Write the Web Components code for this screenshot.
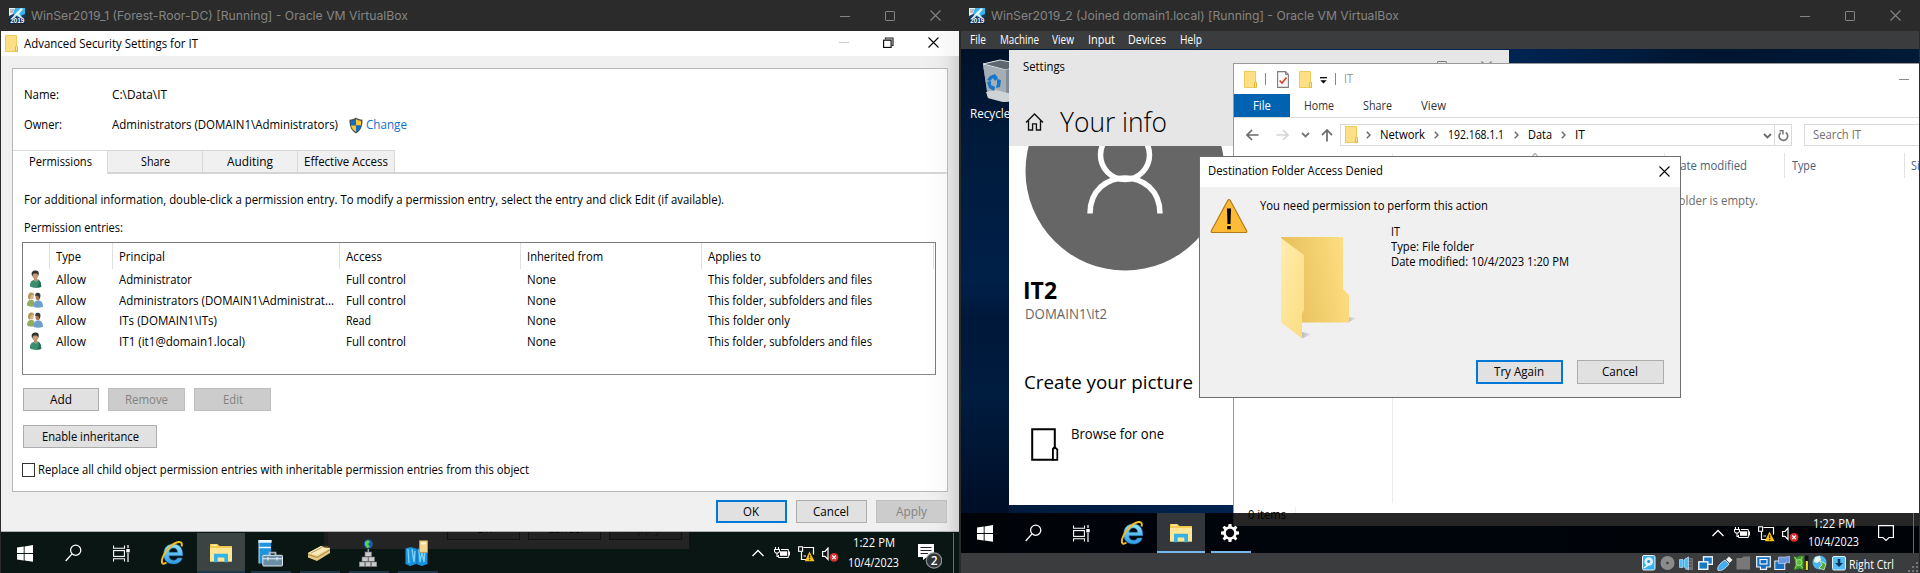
<!DOCTYPE html>
<html lang="en">
<head>
<meta charset="utf-8">
<title>Oracle VM VirtualBox</title>
<style>
html,body{margin:0;padding:0;background:#2b2b2b}
body{width:1920px;height:573px;overflow:hidden;font:12.5px/16px "Open Sans","Noto Sans",sans-serif;color:#000}
</style>
</head>
<body>
<vm-desk></vm-desk>
<script>
const ICONS = {
vm:[16,16,'<rect width="16" height="16" fill="#0f3c63"/><path d="M0 0H7L4 6 0 8Z" fill="#eef4f8"/><path d="M6 0H16V6L9 9 4 6Z" fill="#39b4ee"/><path d="M9 3 12 0 14 1 10 6 14 10 12 11 8 7 4 12 1 12 6 6Z" fill="#fff" opacity=".85"/><path d="M1 2H5M1 4H4" stroke="#888"/><rect y="10" width="16" height="6" fill="#0d2135" opacity=".8"/><text x="1.2" y="15.3" font-size="6.4" font-weight="700" font-family="Liberation Sans" fill="#fff">2019</text>'],
min:[10,10,'<path d="M0 5.5H10" stroke="currentColor"/>'],
max:[10,10,'<rect x=".5" y=".5" width="9" height="9" rx=".6" fill="none" stroke="currentColor"/>'],
close:[11,11,'<path d="M.5.5 10.5 10.5M10.5.5.5 10.5" stroke="currentColor" stroke-width="1.1"/>'],
restore:[11,11,'<path d="M2.5 2.5V1H10V8.5H8.5" fill="none" stroke="#222" stroke-width="1.2"/><path d="M3 1.8H9.5" stroke="#777" stroke-width="1.4"/><rect x=".6" y="3.2" width="7.5" height="7.2" fill="#fff" stroke="#000" stroke-width="1.1"/>'],
folder:[13,17,'<path d="M.5.5H11.5V11L12.5 12V16.5H.5Z" fill="#fddf85" stroke="#eccb5c"/><path d="M10.5 16V12L11.5 10.8 12.5 12V16.5Z" fill="#ffe9a6" stroke="#e3b73d"/>'],
shield:[14,17,'<path d="M7 .5C9 2 11 2.5 13.5 2.7 13.6 9 12 13.5 7 16.5 2 13.5.4 9 .5 2.7 3 2.5 5 2 7 .5Z" fill="#4a4f55"/><path d="M7 2C5.500 3 4 3.600 2 3.900V8.500H7Z" fill="#0c6fce"/><path d="M7 2C8.500 3 10 3.600 12 3.900V8.500H7Z" fill="#fcc52a"/><path d="M2 8.500H7V15C4 13 2.300 11 2 8.500Z" fill="#fcc52a"/><path d="M12 8.500H7V15C10 13 11.700 11 12 8.500Z" fill="#0c6fce"/>'],
user:[13,18,'<path d="M1 16.500C.5 12.500 2.500 10 6 9.500 10 9 12.500 12 12.200 17 8 18.500 4 18 1 16.500Z" fill="#3b8f6e"/><path d="M4.500 9.500 6.500 11.500 9 10" fill="#d9ebe3"/><path d="M5 7H8V10.500L6.500 11.500 5 10Z" fill="#b98a63"/><ellipse cx="6.400" cy="5" rx="2.900" ry="3.700" fill="#c99b73"/><path d="M2.800 5C2 1 5 .3 7 .5 9.800.7 10.300 3 9.300 6 8.800 4 8 3.500 5.500 3.600 4 3.700 3.600 5 3.600 7Z" fill="#33332d"/><path d="M8 9C11 11 10 14 8 17 12 17.500 12 17 12.200 16.800 12.300 12 10.500 9.600 8 9Z" fill="#256d52"/>'],
group:[16,16,'<path d="M0 13.500C0 10 1.500 8 4 7.800 7 8 8 10 8 14 5 15 2 14.800 0 13.500Z" fill="#8fad5c"/><ellipse cx="4.500" cy="4.500" rx="2.200" ry="3" fill="#ddb58c"/><path d="M1 6C.8 1.500 2.500.3 4.500.4 6.500.4 7.300 2 7 3.500 5 2.500 4 3 3.500 5L2.500 8Z" fill="#b4995a"/><path d="M6.800 15C6.500 11 8 8.500 11 8.200 14.500 8.300 16 11 16 14.800 13 16 9 16 6.800 15Z" fill="#6c9dcc"/><ellipse cx="10.800" cy="5" rx="2.300" ry="3.100" fill="#a87654"/><path d="M8.300 4C8 1.300 9.500.8 11.200.8 13.500.9 14 3 13 6L12.300 7C12.300 4 11 3.500 8.300 4Z" fill="#3a3a36"/>'],
start:[16,17,'<path d="M0 2.500 6.700 1.500V8H0ZM7.600 1.400 16 .1V8H7.600ZM0 9H6.700V15.400L0 14.500ZM7.600 9H16V16.800L7.600 15.600Z" fill="#fff"/>'],
search:[17,18,'<circle cx="10.700" cy="6.200" r="5.100" fill="none" stroke="#fff" stroke-width="1.250"/><path d="M7 9.900.7 17" stroke="#fff" stroke-width="1.400"/>'],
tview:[17,17,'<path d="M.5.500V3.300H11.500V.5M.5 16.500V13.700H11.500V16.500" fill="none" stroke="#fff" stroke-width="1.100"/><rect x=".6" y="5.600" width="10.800" height="5.800" fill="none" stroke="#fff" stroke-width="1.100"/><path d="M15 0V3M15 8V17" stroke="#fff" stroke-width="1.200"/><rect x="13.300" y="4" width="3.400" height="3.400" fill="#fff"/>'],
ie:[24,26,'<defs><linearGradient id="g" x1="0" y1="0" x2="0" y2="1"><stop offset="0" stop-color="#8fe3fb"/><stop offset="1" stop-color="#2d9be4"/></linearGradient></defs><path d="M22.800 15.800H9C9.200 18.700 11 20.300 13.500 20.300 15.500 20.300 16.800 19.600 17.400 18H22.200C21 22 17.600 24 13.300 24 7.400 24 3.700 20.300 3.700 14 3.700 7.800 7.500 4 13.300 4 19.500 4 23 8 22.800 15.800ZM9.100 12.300H17.600C17.300 9.500 16 7.900 13.400 7.900 10.900 7.900 9.400 9.500 9.100 12.300Z" fill="url(#g)" stroke="#1a70bd" stroke-width=".5"/><path d="M21.500 6.500C22.500 3.500 21.500 1.600 18.500 2 12 3 3.500 12.500 2 20 1.300 24 3.500 24.500 6.500 22.500" fill="none" stroke="#f3bb21" stroke-width="2"/>'],
explorer:[22,20,'<path d="M0 1H7.500L9.500 3H22V18.500H0Z" fill="#f3c64b"/><rect x="1.200" y="1.600" width="5.500" height="1.300" fill="#fff1b8"/><path d="M0 4.800H22V18.500H0Z" fill="#ffe695"/><path d="M4 19.300V10.800H18V19.300H14.300V14.600H7.700V19.300Z" fill="#35b1ea"/>'],
server:[25,27,'<rect x="1" y=".5" width="12" height="23" fill="#1e94dd"/><path d="M1 .5H13V2H1ZM1 7.500H13" fill="#eaf6ff" stroke="#eaf6ff" stroke-width="1.300"/><path d="M1 .5V23.500" stroke="#b9e1fa"/><path d="M11.500 15V12.700H17.500V15" fill="none" stroke="#aab5bb" stroke-width="1.800"/><rect x="4.800" y="15.300" width="19.700" height="10.700" rx=".8" fill="#6d8fa6" stroke="#dce6ec"/><path d="M5 18.700H24M10 17V20.500M19 17V20.500" stroke="#e8eff3" stroke-width="1.100"/>'],
book:[24,17,'<path d="M1 8 14 1 23 3 23 8 10 16 1 12.500Z" fill="#e6c980"/><path d="M1 8 14 1 23 3 10 10.500Z" fill="#f8eab8"/><path d="M1 9.500 10 12.500 23 4.800" stroke="#aa8746" fill="none"/><path d="M4 8 15 2.500" stroke="#b59a5e"/><path d="M14 .5 21 1 22 3 17 2.600Z" fill="#5b4426"/>'],
sites:[18,28,'<circle cx="9.300" cy="5" r="4.500" fill="#155eaf"/><path d="M6 3 9 1 11 3 9 5 11 8 8 9 6 6Z" fill="#5dcb55"/><path d="M9.300 10V13" stroke="#9aa" stroke-width="1.500"/><g fill="#c7c9ca" stroke="#777" stroke-width=".6"><rect x="6" y="13" width="6.500" height="4.500"/><rect x="3" y="18" width="6" height="4.300"/><rect x="9.500" y="18" width="6" height="4.300"/><rect x=".3" y="23" width="5.500" height="4.500"/><rect x="6.300" y="23" width="5.500" height="4.500"/><rect x="12.300" y="23" width="5.500" height="4.500"/></g>'],
dns:[24,27,'<path d="M.5 8.500 6 7 12 9 18 7 22.500 9V24L17 26 11 24 5 26 .5 24Z" fill="#1a93de"/><path d="M3 9 4 23M7 9 9 22 10 11M14 10 15 22 17 12 19 22 20 10" stroke="#7fd1f7" stroke-width="1.300" fill="none"/><path d="M12 9V24" stroke="#0b62ad"/><rect x="14.500" y=".8" width="8" height="11.500" fill="#f3d590" stroke="#c29b4b" stroke-width=".8"/><rect x="16" y="2.300" width="5" height="2" fill="#fff6d4"/>'],
gear:[18,18,'<path d="M7.600 0H10.400L10.800 2.600 12.400 3.300 14.600 1.700 16.400 3.500 14.800 5.700 15.500 7.300 18 7.600V10.400L15.500 10.800 14.800 12.400 16.400 14.600 14.600 16.400 12.400 14.800 10.800 15.500 10.400 18H7.600L7.200 15.500 5.600 14.800 3.400 16.400 1.600 14.600 3.200 12.400 2.500 10.800 0 10.400V7.600L2.500 7.300 3.200 5.700 1.600 3.500 3.400 1.700 5.600 3.300 7.200 2.600Z" fill="#fff"/><circle cx="9" cy="9" r="4.200" fill="#05080e"/>'],
up:[12,8,'<path d="M.5 7 6 1.500 11.500 7" fill="none" stroke="#fff" stroke-width="1.300"/>'],
battery:[16,12,'<path d="M1.500 0V2.500M4.500 0V2.500M.5 2.500H5.500V4.500L4.200 6H1.800L.5 4.500ZM3 6V9.500H5" fill="none" stroke="#fff" stroke-width="1.100"/><path d="M7 2.500H14.300V10.500H4.500V8" fill="none" stroke="#fff"/><rect x="6" y="4.300" width="7" height="4.500" fill="#fff"/><rect x="14.500" y="4.500" width="1.500" height="4" fill="#fff"/>'],
net:[17,16,'<path d="M5.500 1.500H15.500V8.500M3.500 6V13.500H8M5.500 10H8" fill="none" stroke="#fff" stroke-width="1.200"/><rect x=".6" y=".8" width="4" height="4.500" fill="none" stroke="#fff" stroke-width="1.100"/><path d="M11.500 5.500 16.500 15.300H6.800Z" fill="#fcc30b"/><path d="M11.600 8.700V12.200M11.600 13V14.300" stroke="#222" stroke-width="1.300"/>'],
speaker:[17,15,'<path d="M.6 4.500H3L6 1V12.500L3 9.300H.6Z" fill="none" stroke="#fff" stroke-width="1.200"/><circle cx="12" cy="10.300" r="4.400" fill="#d9302c"/><path d="M10.200 8.500 13.800 12.100M13.800 8.500 10.200 12.100" stroke="#fff" stroke-width="1.300"/>'],
note:[16,17,'<path d="M.6.7H15.400V12.500H11L8 15.500 5 12.500H.6Z" fill="none" stroke="#fff" stroke-width="1.200"/>'],
note2:[24,26,'<path d="M0 0H16V13H9L5 16V13H0Z" fill="#fff"/><path d="M2.500 3.500H13.500M2.500 6.500H13.500M2.500 9.500H10" stroke="#223" stroke-width="1.200"/><circle cx="16" cy="16.500" r="7.700" fill="#2f3537" stroke="#8d9395" stroke-width="1.200"/><text x="12.700" y="21" font-size="12" font-weight="600" font-family="Open Sans" fill="#fff">2</text>'],
bin:[30,43,'<path d="M1 5 18 1 30 4V41L20 43 6 39Z" fill="#8e99a3"/><path d="M1 5 18 1 40 5 24 11Z" fill="#5d676e" stroke="#dfe5e8"/><path d="M1 6 24 11 24 43 6 38Z" fill="#a5adb5"/><path d="M24 11 30 9V42L24 43Z" fill="#838c96"/><path d="M4 33 14 31 30 35V42L22 43 6 39Z" fill="#cfd3d5"/><g fill="#1476cc"><path d="M8 17 13 15 16 19 13 22 11 19 8 22 5 21Z"/><path d="M15 20 19 21 18 28 14 29 15 25Z"/><path d="M5 23 9 22 9 26 13 28 12 32 7 29Z"/></g>'],
home:[19,18,'<path d="M1 9.500 9.500 1 18 9.500M3.500 7.500V17H7.600V10.800H11.400V17H15.500V7.500" fill="none" stroke="#111" stroke-width="1.350"/>'],
avatar:[200,125,'<circle cx="100" cy="25" r="99.500" fill="#666"/><g fill="none" stroke="#fff" stroke-width="5.500"><circle cx="100" cy="9" r="24.500"/><path d="M65 67.500C65 20 135 20 135 67.500"/></g>'],
browse:[28,33,'<path d="M1.200 1.200H23.800V19L22 21V31.800H1.200Z" fill="none" stroke="#000" stroke-width="2"/><path d="M22 31.800V21.500L24 19.500 26.300 21.500V31.800Z" fill="#fff" stroke="#000" stroke-width="1.700"/>'],
check:[12,17,'<path d="M.6.6H8.500L11.400 3.500V16.400H.6Z" fill="#f9f9f9" stroke="#7d7d7d" stroke-width="1.100"/><path d="M8.500.6V3.500H11.400" fill="none" stroke="#7d7d7d"/><path d="M2.600 9.500 5 12 9.500 6.500" fill="none" stroke="#e03a22" stroke-width="1.500"/>'],
qmenu:[7,7,'<path d="M0 .7H7" stroke="#000" stroke-width="1.300"/><path d="M.3 3.200H6.700L3.500 6.500Z" fill="#000"/>'],
back:[13,12,'<path d="M12.500 6H1.200M6 1 1 6 6 11" fill="none" stroke="currentColor" stroke-width="1.700"/>'],
fwd:[13,12,'<path d="M.5 6H11.800M7 1 12 6 7 11" fill="none" stroke="currentColor" stroke-width="1.700"/>'],
upa:[12,13,'<path d="M6 12.500V1.200M1 6.200 6 1 11 6.200" fill="none" stroke="#6b6b6b" stroke-width="1.700"/>'],
down:[9,6,'<path d="M1 1 4.500 4.500 8 1" fill="none" stroke="currentColor" stroke-width="1.900"/>'],
right:[5,8,'<path d="M.8.8 4 4 .8 7.200" fill="none" stroke="#6d6d6d" stroke-width="1.500"/>'],
refresh:[11,12,'<path d="M2.700 2.800A4.300 4.300 0 1 0 7.700 2.500" fill="none" stroke="#777" stroke-width="1.700"/><path d="M1.500.8H5V4.600" fill="none" stroke="#777" stroke-width="1.400"/>'],
warn:[38,36,'<path d="M19 1.500C19.700 1.500 20 2 20.300 2.500L36.700 33C37 34 36.600 34.500 35.800 34.500H2.200C1.400 34.500 1 34 1.300 33L17.700 2.500C18 2 18.300 1.500 19 1.500Z" fill="#fdbb36" stroke="#b57a1b" stroke-width="1.200"/><path d="M17 10.500H21L20.500 26H17.500ZM17.200 28H20.800V31.200H17.200Z" fill="#000"/>'],
bigfolder:[78,104,'<defs><linearGradient id="b" x1="0" x2="1" y1=".4" y2=".2"><stop offset="0" stop-color="#e5bd58"/><stop offset="1" stop-color="#ffe083"/></linearGradient><linearGradient id="f" x1="0" x2="1" y2="1"><stop offset="0" stop-color="#ffedae"/><stop offset="1" stop-color="#fbdc80"/></linearGradient><linearGradient id="s"><stop offset="0" stop-color="#bbb"/><stop offset="1" stop-color="#eee"/></linearGradient></defs><path d="M67 80 76 81 67 85.500Z" fill="url(#s)"/><path d="M21 95 31 97 21 101.500Z" fill="url(#s)"/><path d="M0 0H61L62 1V52L68 58V84L67 85.500H5L0 84Z" fill="url(#b)"/><path d="M0 1 23 18V73L21 77V101.500L0 85.500Z" fill="url(#f)"/>'],
sHdd:[14,16,'<rect x=".5" y=".5" width="12.500" height="14.500" rx="1.500" fill="#39b0ee" stroke="#e6f5fd"/><circle cx="6.700" cy="6.500" r="4.300" fill="#dff2fb"/><circle cx="6.700" cy="6.500" r="1.500" fill="#2790cf"/><path d="M2 13 6 10" stroke="#fff" stroke-width="1.500"/>'],
sCd:[15,16,'<circle cx="7.500" cy="8" r="7" fill="#8b8b8b"/><circle cx="7.500" cy="8" r="1.300" fill="#3c3c3c"/>'],
sAudio:[15,15,'<path d="M6 2H14V14H6Z" fill="#707070"/><path d="M7 4H13M7 7H13M7 10H13" stroke="#444"/><path d="M.5 3.500H4V11.500H.5ZM5 4 9.500.8V14L5 11Z" fill="#53bdf3" stroke="#d7f0fd" stroke-width=".6"/>'],
sNet:[15,15,'<rect x="5.500" y=".8" width="9" height="7.500" fill="#1879c8" stroke="#f2f9fd" stroke-width="1.400"/><rect x=".8" y="5.800" width="9" height="7.500" fill="#1879c8" stroke="#f2f9fd" stroke-width="1.400"/>'],
sUsb:[16,15,'<path d="M1 14.500C0 11 2 8 8 4L12 8C8 13.500 4 15 1 14.500Z" fill="#41aef2" stroke="#d8effc" stroke-width=".8"/><path d="M9 3.500 12 .5 15.500 4 12.500 7Z" fill="#f2f2f2"/>'],
sShare:[15,14,'<path d="M.5 2H6L7.500.5H14V13.500H.5Z" fill="#787878"/>'],
sDisp:[15,14,'<path d="M.7.7H14.300V11H10.500V13.300H4.500V11H.7Z" fill="#166fc0" stroke="#f0f7fc" stroke-width="1.200"/><rect x="4" y="3.500" width="7" height="4.500" fill="#166fc0" stroke="#fff" stroke-width="1.100"/>'],
sRec:[16,15,'<rect x=".8" y="5" width="10" height="8.500" fill="#1a72c4" stroke="#e7f2fa"/><path d="M4.500 1H12L15.500 0V7L12 6V7.500H4.500Z" fill="#6c97de" stroke="#d4e2f8" stroke-width=".6"/>'],
sCpu:[16,16,'<path d="M.5 1 4 2.500 6 1 10.500 .5V15L6.500 13.500 1 15 2.500 8Z" fill="#3f9c25"/><path d="M1.500 2 9.500 13M9.500 2 2 13.500" stroke="#a5e07e" stroke-width=".9"/><circle cx="6" cy="7.500" r="3" fill="#57bd37" stroke="#c9f2ad" stroke-width=".7"/><rect x="12" y=".5" width="3.500" height="15" fill="#111"/><rect x="12.700" y="6" width="2.200" height="9" fill="#f0e423"/>'],
sMouse:[16,16,'<circle cx="7.500" cy="7.500" r="7" fill="#4fb4ea"/><path d="M3 2 8 1 9 5 5 8 2 7Z" fill="#e9f7e4"/><path d="M8 6 14 9 12 15 7 13 10 10Z" fill="#4faa2e" stroke="#e3f6d9" stroke-width=".7"/>'],
sKey:[14,15,'<rect x=".5" y=".5" width="13" height="13.500" rx="1.500" fill="#55bdf2" stroke="#d9f2fe"/><path d="M5.700 3H8.300V7H11L7 11 3 7H5.700Z" fill="#06345d"/>'],
grip:[10,10,'<path d="M8 0H10V2H8ZM8 4H10V6H8ZM4 4H6V6H4ZM8 8H10V10H8ZM4 8H6V10H4ZM0 8H2V10H0Z" fill="#777"/>'],
caretup:[6,3,'<path d="M.3 3 3 .5 5.700 3" fill="none" stroke="#777"/>']
};

/* Text run squeezed horizontally to the width given in its w attribute. */
class WinText extends HTMLElement{
  connectedCallback(){
    if(this.shadowRoot) return;
    this.attachShadow({mode:'open'}).innerHTML='<style>:host{display:block;flex:none;white-space:nowrap;height:16px;line-height:16px}span{display:inline-block;transform-origin:0 50%;line-height:inherit;vertical-align:top}</style><span><slot></slot></span>';
    const w=+this.getAttribute('w');
    if(w){const s=this.shadowRoot.querySelector('span');const n=s.getBoundingClientRect().width;
      this.style.width=w+'px';s.style.transform='scaleX('+(w/n)+')';}
  }
}
class WinIcon extends HTMLElement{
  connectedCallback(){
    if(this.shadowRoot) return;
    const [w,h,p]=ICONS[this.getAttribute('name')];
    this.attachShadow({mode:'open'}).innerHTML=`<style>:host{display:block;flex:none;width:${w}px;height:${h}px}svg{display:block}</style><svg width="${w}" height="${h}" viewBox="0 0 ${w} ${h}">${p}</svg>`;
  }
}
class WinButton extends HTMLElement{
  connectedCallback(){
    if(this.shadowRoot) return;
    this.attachShadow({mode:'open'}).innerHTML='<style>:host{display:flex;box-sizing:border-box;flex:none;align-items:center;justify-content:center;height:23px;background:#e1e1e1;border:1px solid #adadad}:host([primary]){border:2px solid #0078d7}:host([disabled]){background:#ccc;border-color:#bfbfbf;color:#838383}</style><slot></slot>';
  }
}
const define=(name,html)=>customElements.define(name,class extends HTMLElement{
  connectedCallback(){
    if(this.shadowRoot) return;
    const t=document.createElement('template');
    t.innerHTML=typeof html==='function'?html(this):html;
    this.attachShadow({mode:'open'}).appendChild(t.content.cloneNode(true));
  }
});
customElements.define('win-text',WinText);
customElements.define('win-icon',WinIcon);
customElements.define('win-button',WinButton);

define('vm-window',el=>`<style>
:host{display:block;width:960px;height:573px;box-sizing:border-box;padding:0 1px 0 1px;background:#2b2b2b;overflow:hidden;position:relative}
header{display:flex;align-items:center;height:31px;color:#858585;font-family:Inter,"Open Sans",sans-serif;font-size:12px;padding:0 18px 0 8px}
.t{margin-left:6px;margin-top:1px}.c{margin-left:auto;display:flex;align-items:center;gap:35px}
</style><header><win-icon name="vm"></win-icon><win-text class="t" w="${el.getAttribute('tw')}">${el.getAttribute('caption')}</win-text>
<div class="c"><win-icon name="min"></win-icon><win-icon name="max"></win-icon><win-icon name="close"></win-icon></div></header><slot></slot>`);

define('permission-list',()=>{
 const rows=[['user',['Administrator',73],['Full control',60],['This folder, subfolders and files',164]],
 ['group',['Administrators (DOMAIN1\\Administrat...',215],['Full control',60],['This folder, subfolders and files',164]],
 ['group',['ITs (DOMAIN1\\ITs)',98],['Read',25],['This folder only',82]],
 ['user',['IT1 (it1@domain1.local)',126],['Full control',60],['This folder, subfolders and files',164]]];
 const t=([s,w])=>`<div><win-text w="${w}">${s}</win-text></div>`;
 return `<style>
:host{display:block;box-sizing:border-box;width:914px;height:133px;border:1px solid #7b7b7b;border-bottom-color:#8a8a8a}
.r{display:grid;grid-template-columns:26px 63px 227px 181px 181px 232px 2px;height:20.5px;align-items:center}
.r>div{padding-left:7px}.r>win-icon{margin-left:5px}
.h{height:27px;align-items:start}.h>div{box-sizing:border-box;border-left:1px solid #e0e0e0;height:26px;padding:6px 0 0 6px}.h>div:first-child{border:0}.h>div:last-child{padding:0}
</style><div class="r h"><div></div>${t(['Type',25])}${t(['Principal',46])}${t(['Access',36])}${t(['Inherited from',76])}${t(['Applies to',53])}<div></div></div>`+
 rows.map(r=>`<div class="r"><win-icon name="${r[0]}" style="margin-left:${r[0]=='user'?6:4}px;margin-top:-2px"></win-icon>${t(['Allow',30])}${t(r[1])}${t(r[2])}${t(['None',29])}${t(r[3])}</div>`).join('');
});

define('security-dialog',`<style>
:host{display:block;height:501px;box-sizing:border-box;background:linear-gradient(90deg,transparent 922px,rgba(0,0,0,.012) 935px,rgba(0,0,0,.04) 946px,rgba(0,0,0,.13) 958px),#f0f0f0;border-bottom:1px solid #aeb2b1}
.title{display:flex;align-items:center;height:25px;background:linear-gradient(90deg,#fff 930px,#f4f4f4);padding:0 20px 0 4px}
.title win-text{margin-left:6px}.ctl{margin-left:auto;display:flex;align-items:center;gap:34px;margin-top:-3px}
.panel{margin:12px 11px 0 11px;height:422px;border:1px solid #b8b8b8;background:linear-gradient(90deg,#fff 910px,#f9f9f9)}
.row{display:flex;align-items:center;padding-left:11px;height:16px}
.tabs{display:flex;height:22px;margin-top:17px;border-bottom:2px solid #d4d4d4}
.tab{display:flex;align-items:center;justify-content:center;box-sizing:border-box;background:#f0f0f0;border:1px solid #d9d9d9;border-width:1px 1px 0 0;width:95px}
.tab.on{background:#fff;width:95px;height:24px;padding-bottom:2px}.tab:last-child{width:97px}
.btns{display:flex;gap:9px;margin-left:10px}
.box{width:11px;height:12px;border:1px solid #333;margin:0 3px 0 -2px;background:#fff}
.foot{display:flex;gap:9px;justify-content:flex-end;padding:8px 12px 0 0}
.foot win-text{margin-left:-1px}
</style>
<div class="title"><win-icon name="folder"></win-icon><win-text w="174">Advanced Security Settings for IT</win-text><div class="ctl"><win-icon name="min" style="color:#ccc"></win-icon><win-icon name="restore"></win-icon><win-icon name="close"></win-icon></div></div>
<div class="panel">
<div class="row" style="margin-top:18px"><win-text w="35">Name:</win-text><win-text w="55" style="margin-left:53px">C:\\Data\\IT</win-text></div>
<div class="row" style="margin-top:14px"><win-text w="38">Owner:</win-text><win-text w="226" style="margin-left:50px">Administrators (DOMAIN1\\Administrators)</win-text><win-icon name="shield" style="margin-left:11px"></win-icon><win-text w="41" style="margin-left:3px;color:#0c72cc">Change</win-text></div>
<div class="tabs"><div class="tab on"><win-text w="63">Permissions</win-text></div><div class="tab"><win-text w="29">Share</win-text></div><div class="tab"><win-text w="46">Auditing</win-text></div><div class="tab"><win-text w="84">Effective Access</win-text></div></div>
<div class="row" style="margin-top:18px"><win-text w="700">For additional information, double-click a permission entry. To modify a permission entry, select the entry and click Edit (if available).</win-text></div>
<div class="row" style="margin-top:12px"><win-text w="99">Permission entries:</win-text></div>
<permission-list style="margin:6px 0 0 9px"></permission-list>
<div class="btns" style="margin-top:13px"><win-button style="width:76px"><win-text w="22">Add</win-text></win-button><win-button disabled style="width:77px"><win-text w="43">Remove</win-text></win-button><win-button disabled style="width:77px"><win-text w="20">Edit</win-text></win-button></div>
<div class="btns" style="margin-top:14px"><win-button style="width:134px"><win-text w="97">Enable inheritance</win-text></win-button></div>
<div class="row" style="margin-top:14px"><div class="box"></div><win-text w="491" style="margin-top:-1px">Replace all child object permission entries with inheritable permission entries from this object</win-text></div>
</div>
<div class="foot"><win-button primary style="width:71px"><win-text w="16">OK</win-text></win-button><win-button style="width:71px"><win-text w="36">Cancel</win-text></win-button><win-button disabled style="width:71px"><win-text w="31">Apply</win-text></win-button></div>`);

define('task-bar',el=>{
 const apps=el.getAttribute('apps').split(' '),dim=el.hasAttribute('dim');
 return `<style>
:host{display:flex;box-sizing:border-box;height:40px;position:relative;background:rgba(0,0,0,.85);color:#fff}
.c{width:48px;display:flex;align-items:center;justify-content:center;flex:none;position:relative}
.a{margin-right:1px}
.a.run::after{content:"";display:block;position:absolute;left:5px;right:3px;bottom:0;height:2px;background:${dim?'#1d3648':'#76b9ed'}}
.a.on{background:rgba(255,255,255,.2)}.a.on::after{left:0;right:0}
.tray{margin-left:auto;display:flex;align-items:center;padding-right:5px}
.clock{width:51px;margin-left:9px}
.show{width:1px;align-self:stretch;background:#666c6c}
</style><div class="c"><win-icon name="start"></win-icon></div><div class="c"><win-icon name="search"></win-icon></div><div class="c" style="margin-right:3px"><win-icon name="tview"></win-icon></div>`+
 apps.map((a,i)=>`<div class="c a ${i?'run':''} ${i==1?'on':''}"><win-icon name="${a}"></win-icon></div>`).join('')+
 `<div class="tray"><win-icon name="up"></win-icon><win-icon name="battery" style="margin-left:10px"></win-icon><win-icon name="net" style="margin-left:8px;margin-top:2px"></win-icon><win-icon name="speaker" style="margin-left:7px;margin-top:2px"></win-icon>
<div class="clock"><win-text w="42" style="margin:0 0 ${dim?4:2}px 5px">1:22 PM</win-text><win-text w="51">10/4/2023</win-text></div>
<win-icon name="${dim?'note2':'note'}" style="margin:${dim?'8px 11px 0 19px':'0 19px 0 19px'}"></win-icon><div class="show"></div></div>`;
});

/* Window hidden behind the taskbar of the first machine. */
define('ghost-window',`<style>
:host{display:block;position:absolute;left:324px;top:532px;width:365px;height:17px;box-sizing:border-box;background:#eee;overflow:hidden;border-left:4px solid #bbb}
.r{display:flex;gap:8px;margin:-15px 0 0 119px}
win-button{height:23px;width:73px;border-color:#777}
</style><div class="r"><win-button><win-text w="16">OK</win-text></win-button><win-button><win-text w="36">Cancel</win-text></win-button><win-button disabled><win-text w="31">Apply</win-text></win-button></div>`);

define('settings-app',`<style>
:host{display:block;position:absolute;left:48px;top:1px;width:500px;height:455px;background:#fff;overflow:hidden}
header{background:#e6e6e6;height:87px;padding:9px 0 0 14px}
.top{display:flex}.h{display:flex;align-items:center;margin-top:28px;height:36px}
.big{font-size:27.5px;font-weight:300;height:36px;line-height:36px;margin:2px 0 0 16px}
.ctl{display:flex;gap:34px;margin:2px 17px 0 auto;color:#777;height:11px}
main{padding-left:15px}
</style><header><div class="top"><win-text w="42">Settings</win-text><div class="ctl"><win-icon name="max"></win-icon><win-icon name="close"></win-icon></div></div>
<div class="h"><win-icon name="home" style="margin:2px 0 0 2px"></win-icon><win-text class="big" w="107">Your info</win-text></div></header>
<main><win-icon name="avatar" style="margin-left:1px"></win-icon>
<win-text w="34" style="font-size:23.500px;font-weight:700;height:30px;line-height:30px;margin:4px 0 0 -1px">IT2</win-text>
<win-text w="82" style="font-size:14px;height:20px;line-height:20px;color:#666;margin:-1px 0 0 1px">DOMAIN1\\it2</win-text>
<win-text w="169" style="font-size:19px;height:26px;line-height:26px;margin-top:45px">Create your picture</win-text>
<div style="display:flex;margin:29px 0 0 7px"><win-icon name="browse" style="margin-top:4px"></win-icon><win-text w="93" style="font-size:14px;height:20px;line-height:20px;margin-left:12px">Browse for one</win-text></div>
</main>`);

define('explorer-app',`<style>
:host{display:block;position:absolute;left:272px;top:14px;width:686px;height:463px;box-sizing:border-box;background:#fff;border:1px solid #999;border-width:1px 0 0 1px;overflow:hidden}
.q{display:flex;align-items:center;height:30px;padding:0 10px;box-sizing:border-box}
.s{width:1px;height:12px;background:#888}
.tabs{display:flex;align-items:center;height:23px;border-bottom:1px solid #d9d9d9;color:#333}
.file{display:flex;align-items:center;width:56px;height:23px;background:#0063b1;color:#fff;justify-content:center}
.nav{display:flex;align-items:center;height:34px;padding:0 0 1px 12px}
.addr{display:flex;flex:none;align-items:center;box-sizing:border-box;height:22px;width:452px;border:1px solid #d9d9d9;margin-left:7px;padding-left:4px}
.addr win-text{margin-left:9px}
.find{box-sizing:border-box;flex:none;height:22px;width:130px;border:1px solid #d9d9d9;margin-left:12px;padding:2px 0 0 8px;color:#707070}
.main{display:flex;height:350px}.side{width:158px;border-right:1px solid #ececec}
.body{flex:1;min-width:0}
.cols{display:grid;grid-template-columns:272px 120px 120px 14px;height:25px;color:#4c607a}
.cols div{border-right:1px solid #e3e3e3;padding:5px 0 0 7px;box-sizing:border-box}
.cols div:last-child{border:0}
</style>
<div class="q"><win-icon name="folder"></win-icon><div class="s" style="margin:0 11px 0 8px"></div><win-icon name="check"></win-icon><win-icon name="folder" style="margin-left:10px"></win-icon><win-icon name="qmenu" style="margin:3px 8px 0 8px"></win-icon><div class="s"></div><win-text w="9" style="margin-left:8px;color:#999">IT</win-text><win-icon name="min" style="margin-left:auto;color:#888"></win-icon></div>
<div class="tabs"><div class="file"><win-text w="18">File</win-text></div><win-text w="30" style="margin-left:14px">Home</win-text><win-text w="29" style="margin-left:29px">Share</win-text><win-text w="25" style="margin-left:29px">View</win-text></div>
<div class="nav"><win-icon name="back" style="color:#6b6b6b"></win-icon><win-icon name="fwd" style="color:#d5d5d5;margin-left:17px"></win-icon><win-icon name="down" style="color:#777;margin-left:12px"></win-icon><win-icon name="upa" style="margin-left:11px"></win-icon>
<div class="addr"><win-icon name="folder" style="margin-right:8px;margin-top:-2px"></win-icon><win-icon name="right"></win-icon><win-text w="45">Network</win-text><win-icon name="right" style="margin-left:9px"></win-icon><win-text w="56">192.168.1.1</win-text><win-icon name="right" style="margin-left:10px"></win-icon><win-text w="24">Data</win-text><win-icon name="right" style="margin-left:9px"></win-icon><win-text w="10">IT</win-text>
<win-icon name="down" style="margin:2px 2px 0 auto;color:#6b6b6b"></win-icon><div style="width:1px;height:20px;background:#d9d9d9"></div><win-icon name="refresh" style="margin:1px 2px 0 3px"></win-icon></div>
<div class="find"><win-text w="48">Search IT</win-text></div></div>
<div class="main"><div class="side"></div><div class="body"><div class="cols"><div style="padding:0 0 0 139px"><win-icon name="caretup"></win-icon></div><div style="padding-left:7px"><win-text w="75">Date modified</win-text></div><div><win-text w="24">Type</win-text></div><div style="padding-left:6px"><win-text w="20">Size</win-text></div></div>
<win-text w="108" style="margin:15px 0 0 257px;color:#6d6d6d">This folder is empty.</win-text></div></div>
<div style="display:flex;height:23px;padding:4px 0 0 14px"><win-text w="38">0 items</win-text><div style="width:1px;height:7px;background:#eee;margin-left:9px"></div></div>`);

define('denied-dialog',`<style>
:host{display:block;position:absolute;left:238px;top:107px;width:482px;height:242px;box-sizing:border-box;border:1px solid #6e6e6e;background:#f0f0f0;overflow:hidden;display:flex;flex-direction:column}
header{display:flex;align-items:flex-start;background:#fff;height:24px;padding:6px 10px 0 8px}
.m{display:flex;flex:1}.txt{margin-top:11px}
.f{display:flex;gap:14px;justify-content:flex-end;padding:0 16px 13px 0}win-button{width:87px;height:24px}
.f win-text{margin-left:-1px}
.d win-text{height:15px;line-height:15px}
</style><header><win-text w="175">Destination Folder Access Denied</win-text><win-icon name="close" style="margin:3px 0 0 auto"></win-icon></header>
<div class="m"><win-icon name="warn" style="margin:11px 0 0 10px"></win-icon><div class="txt" style="margin-left:12px"><win-text w="228">You need permission to perform this action</win-text>
<div style="display:flex;margin:10px 0 0 21px"><win-icon name="bigfolder" style="margin-top:13px"></win-icon><div class="d" style="margin-left:32px"><win-text w="9">IT</win-text><win-text w="83">Type: File folder</win-text><win-text w="178">Date modified: 10/4/2023 1:20 PM</win-text></div></div></div></div>
<div class="f"><win-button primary><win-text w="50">Try Again</win-text></win-button><win-button><win-text w="36">Cancel</win-text></win-button></div>`);

define('vm-menu',`<style>:host{display:flex;height:18px;background:#3b3c3e;color:#fff;padding-left:9px;align-items:center;gap:13.500px}</style>
<win-text w="16">File</win-text><win-text w="39">Machine</win-text><win-text w="22">View</win-text><win-text w="27">Input</win-text><win-text w="38">Devices</win-text><win-text w="22">Help</win-text>`);
define('vm-status',`<style>:host{display:flex;height:20px;background:#3b3c3e;color:#fff;justify-content:flex-end;align-items:center}.i{width:19.100px;display:flex;justify-content:center}</style>`+
['sHdd','sCd','sAudio','sNet','sUsb','sShare','sDisp','sRec','sCpu','sMouse','sKey'].map(n=>`<div class="i"><win-icon name="${n}"></win-icon></div>`).join('')+
`<win-text w="45" style="margin:3px 14px 0 0">Right Ctrl</win-text><win-icon name="grip" style="margin:8px 1px 0 0"></win-icon>`);

define('guest-desktop',`<style>
:host{display:flex;flex-direction:column;position:relative;height:504px;overflow:hidden;background:linear-gradient(90deg,#00142e 0,#001a3c 48px,#00244e 280px,#002450 560px,#00152f 750px,#001a38 957px)}
.bin{padding:10px 0 0 21px;height:454px;background:linear-gradient(#001229 0,#001a3a 18%,#002049 50%,#00183a 58%,#001c3f 75%,#000e26);width:27px;overflow:hidden}
.bin win-text{color:#fff;margin:4px 0 0 -12px}
</style>
<div class="bin"><win-icon name="bin"></win-icon><win-text w="61">Recycle Bin</win-text></div>
<settings-app></settings-app><explorer-app></explorer-app><denied-dialog></denied-dialog>
<task-bar apps="ie explorer gear"></task-bar>`);

define('vm-desk',`<style>:host{display:grid;grid-template-columns:960px 960px}.bar{background:#439385;height:41px}</style>
<vm-window tw="377" caption="WinSer2019_1 (Forest-Roor-DC) [Running] - Oracle VM VirtualBox"><security-dialog></security-dialog><div class="bar"><ghost-window></ghost-window><task-bar dim style="height:41px;padding-top:1px" apps="ie explorer server book sites dns"></task-bar></div></vm-window>
<vm-window tw="408" caption="WinSer2019_2 (Joined domain1.local) [Running] - Oracle VM VirtualBox"><vm-menu></vm-menu><guest-desktop></guest-desktop><vm-status></vm-status></vm-window>`);
</script>
</body>
</html>
